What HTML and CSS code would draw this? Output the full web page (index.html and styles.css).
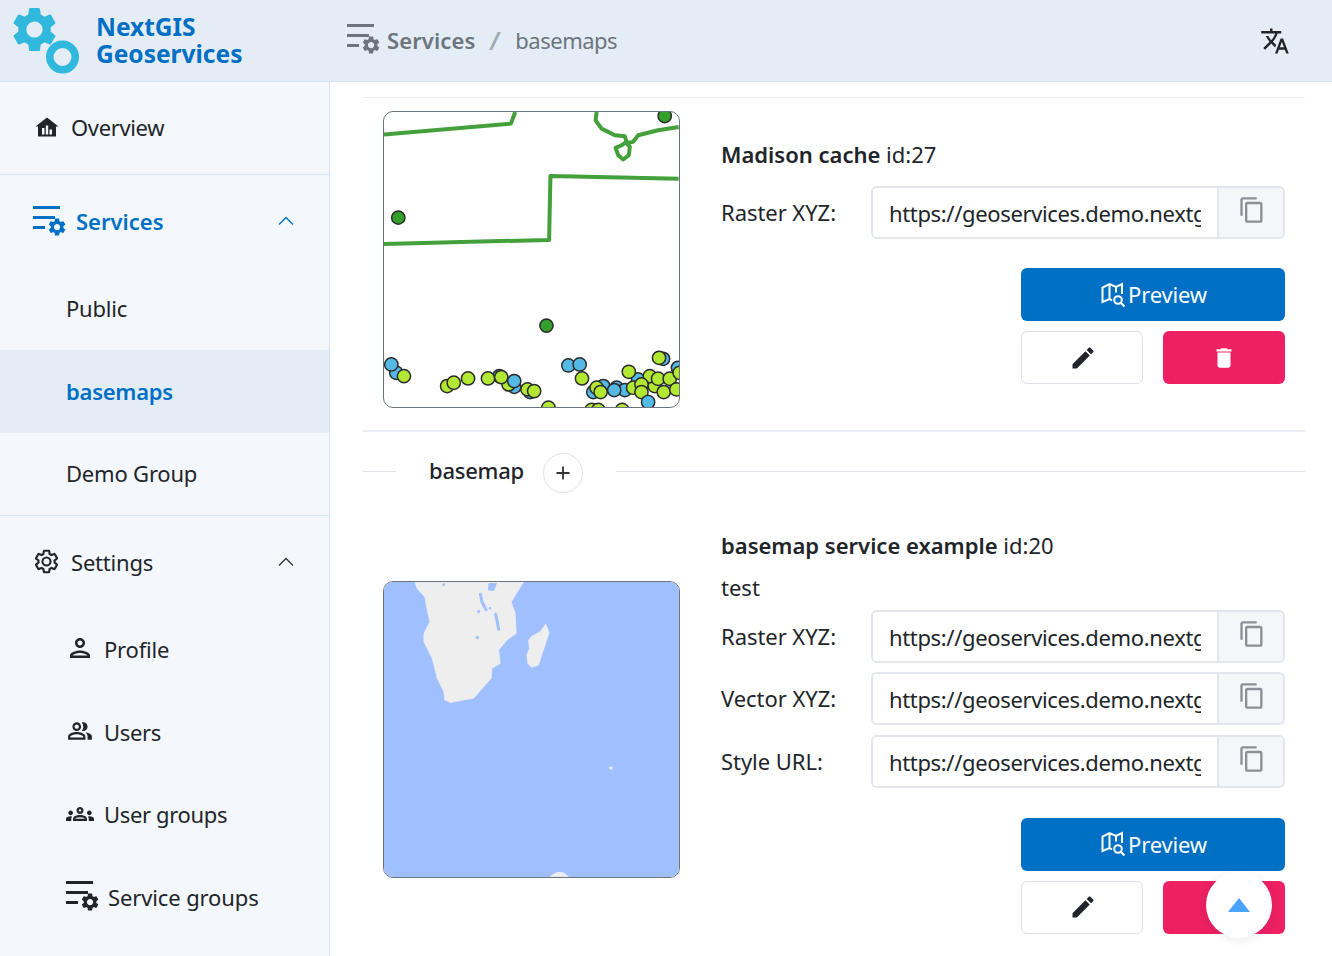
FILE: index.html
```html
<!DOCTYPE html>
<html lang="en">
<head>
<meta charset="utf-8">
<title>NextGIS Geoservices</title>
<link rel="stylesheet" href="styles.css">
</head>
<body>
<svg class="defs" width="0" height="0" aria-hidden="true">
  <defs>
    <path id="gear" d="M19.14 12.94c.04-.3.06-.61.06-.94 0-.32-.02-.64-.07-.94l2.03-1.58c.18-.14.23-.41.12-.61l-1.92-3.32c-.12-.22-.37-.29-.59-.22l-2.39.96c-.5-.38-1.03-.7-1.62-.94l-.36-2.54c-.04-.24-.24-.41-.48-.41h-3.84c-.24 0-.43.17-.47.41l-.36 2.54c-.59.24-1.13.57-1.62.94l-2.39-.96c-.22-.08-.47 0-.59.22L2.74 8.87c-.12.21-.08.47.12.61l2.03 1.58c-.05.3-.09.63-.09.94s.02.64.07.94l-2.03 1.58c-.18.14-.23.41-.12.61l1.92 3.32c.12.22.37.29.59.22l2.39-.96c.5.38 1.03.7 1.62.94l.36 2.54c.05.24.24.41.48.41h3.84c.24 0 .44-.17.47-.41l.36-2.54c.59-.24 1.13-.56 1.62-.94l2.39.96c.22.08.47 0 .59-.22l1.92-3.32c.12-.22.07-.47-.12-.61l-2.01-1.58zM12 15.6c-1.98 0-3.6-1.62-3.6-3.6s1.62-3.6 3.6-3.6 3.6 1.62 3.6 3.6-1.62 3.6-3.6 3.6z"/>
    <g id="services">
      <rect x="0" y="0" width="27" height="3"/>
      <rect x="0" y="10" width="22" height="3"/>
      <rect x="0" y="20" width="12" height="3"/>
      <use href="#gear" transform="translate(13.500 10.500) scale(.88)"/>
    </g>
    <path id="copy" d="M16 1H4c-1.1 0-2 .9-2 2v14h2V3h12V1zm3 4H8c-1.1 0-2 .9-2 2v14c0 1.1.9 2 2 2h11c1.1 0 2-.9 2-2V7c0-1.1-.9-2-2-2zm0 16H8V7h11v14z"/>
    <path id="edit" d="M3 17.25V21h3.75L17.81 9.94l-3.75-3.75L3 17.25zM20.71 7.04c.39-.39.39-1.02 0-1.41l-2.34-2.34c-.39-.39-1.02-.39-1.41 0l-1.83 1.83 3.75 3.75 1.83-1.83z"/>
    <path id="trash" d="M6 19c0 1.1.9 2 2 2h8c1.1 0 2-.9 2-2V7H6v12zM19 4h-3.5l-1-1h-5l-1 1H5v2h14V4z"/>
    <g id="mapsearch" fill="none" stroke="currentColor" stroke-width="2">
      <path d="M11 17.500 8.500 16 1.500 19V4.500l7-3.500 6.500 3 6-3V11"/>
      <path d="M8.500 1V16M15 4V9.500"/>
      <circle cx="17" cy="17" r="3.800"/>
      <path d="M19.800 19.800 23.500 23.500"/>
    </g>
  </defs>
</svg>

<header class="topbar">
  <div class="brand">
    <svg class="brand-logo" viewBox="0 0 68 68" aria-hidden="true">
      <use href="#gear" class="logo-gear" transform="translate(-5.500 -4.500) scale(2.250)"/>
      <circle class="logo-ring" cx="49.500" cy="50" r="12.750"/>
    </svg>
    <div class="brand-name">NextGIS<br>Geoservices</div>
  </div>
  <nav class="crumbs">
    <svg class="icon-services crumb-icon" viewBox="0 0 32 32" aria-hidden="true"><use href="#services"/></svg>
    <span class="crumb-main">Services</span>
    <span class="crumb-sep">/</span>
    <span class="crumb-sub">basemaps</span>
  </nav>
  <svg class="translate" viewBox="0 0 24 24" aria-hidden="true"><path d="M12.87 15.070l-2.540-2.510.03-.03c1.740-1.940 2.980-4.170 3.710-6.530H17V4h-7V2H8v2H1v1.990h11.170C11.500 7.920 10.440 9.750 9 11.350 8.070 10.320 7.300 9.190 6.690 8h-2c.73 1.630 1.730 3.170 2.980 4.560l-5.090 5.020L4 19l5-5 3.110 3.110.76-2.040zM18.500 10h-2L12 22h2l1.120-3h4.750L21 22h2l-4.500-12zm-2.620 7l1.620-4.330L19.120 17h-3.240z"/></svg>
</header>

<div class="layout">
  <aside class="sidebar">
    <div class="top-item first-top border-b">
      <svg class="icon-24" viewBox="0 0 24 24" aria-hidden="true"><path fill-rule="evenodd" d="M12 2.500 0.500 11.500H3V21.500H21V11.500H23.500ZM7 13H9.500V19.500H7ZM10.800 10.500H13.200V19.500H10.800ZM14.500 14.500H17V19.500H14.500Z"/></svg>
      <span class="tight">Overview</span>
    </div>
    <div class="top-item active-top">
      <svg class="icon-services side-services" viewBox="0 0 32 32" aria-hidden="true"><use href="#services"/></svg>
      <span class="strong">Services</span>
      <svg class="chev" viewBox="0 0 16 10" aria-hidden="true"><path d="M1 8.500 8 1.500 15 8.500"/></svg>
    </div>
    <div class="sub-item">Public</div>
    <div class="sub-item current">basemaps</div>
    <div class="sub-item border-b">Demo Group</div>
    <div class="top-item settings-top">
      <svg class="gear-outline" viewBox="0 0 24 24" aria-hidden="true"><use href="#gear"/></svg>
      <span>Settings</span>
      <svg class="chev" viewBox="0 0 16 10" aria-hidden="true"><path d="M1 8.500 8 1.500 15 8.500"/></svg>
    </div>
    <div class="sub-item">
      <svg class="sub-icon profile-icon" viewBox="0 0 24 24" aria-hidden="true"><path d="M12 6c1.100 0 2 .9 2 2s-.9 2-2 2-2-.9-2-2 .9-2 2-2m0 10c2.700 0 5.800 1.290 6 2H6c.23-.72 3.310-2 6-2m0-12C9.790 4 8 5.790 8 8s1.790 4 4 4 4-1.790 4-4-1.790-4-4-4zm0 10c-2.670 0-8 1.340-8 4v2h16v-2c0-2.660-5.330-4-8-4z"/></svg>
      <span>Profile</span>
    </div>
    <div class="sub-item">
      <svg class="sub-icon users-icon" viewBox="0 0 24 24" aria-hidden="true"><path d="M16.670 13.130C18.040 14.060 19 15.320 19 17v3h4v-3c0-2.180-3.570-3.470-6.330-3.870z"/><path d="M15 12c2.210 0 4-1.790 4-4s-1.790-4-4-4c-.47 0-.91.1-1.330.24C14.500 5.270 15 6.580 15 8s-.5 2.730-1.330 3.760c.42.14.86.24 1.330.24z"/><path d="M9 12c2.210 0 4-1.790 4-4s-1.790-4-4-4-4 1.790-4 4 1.790 4 4 4zm0-6c1.100 0 2 .9 2 2s-.9 2-2 2-2-.9-2-2 .9-2 2-2z"/><path d="M9 13c-2.670 0-8 1.340-8 4v3h16v-3c0-2.660-5.330-4-8-4zm6 5H3v-.99C3.200 16.290 6.300 15 9 15s5.800 1.290 6 2v1z"/></svg>
      <span class="tight">Users</span>
    </div>
    <div class="sub-item">
      <svg class="sub-icon groups-icon" viewBox="0 0 24 24" aria-hidden="true"><path d="M4 13c1.100 0 2-.9 2-2s-.9-2-2-2-2 .9-2 2 .9 2 2 2zm1.130 1.100c-.37-.06-.74-.1-1.130-.1-.99 0-1.930.21-2.780.58C.48 14.900 0 15.620 0 16.430V18h4.500v-1.610c0-.83.23-1.610.63-2.290zM20 13c1.100 0 2-.9 2-2s-.9-2-2-2-2 .9-2 2 .9 2 2 2zm4 3.430c0-.81-.48-1.530-1.220-1.850-.85-.37-1.790-.58-2.780-.58-.39 0-.76.04-1.130.1.4.68.63 1.460.63 2.290V18H24v-1.570zm-7.760-2.780C15.070 13.140 13.630 12.750 12 12.750c-1.630 0-3.070.4-4.240.9C6.680 14.130 6 15.210 6 16.390V18h12v-1.610c0-1.180-.68-2.260-1.760-2.740zM8.070 16c.09-.23.13-.39.91-.69.97-.38 1.990-.56 3.020-.56s2.050.18 3.020.56c.77.3.81.46.91.69H8.070zM12 8c.55 0 1 .45 1 1s-.45 1-1 1-1-.45-1-1 .45-1 1-1m0-2c-1.660 0-3 1.340-3 3s1.340 3 3 3 3-1.340 3-3-1.340-3-3-3z"/></svg>
      <span class="tight">User groups</span>
    </div>
    <div class="sub-item">
      <svg class="icon-services sub-services" viewBox="0 0 32 32" aria-hidden="true"><use href="#services"/></svg>
      <span class="loose">Service groups</span>
    </div>
  </aside>

  <main class="main">
    <div class="rule-thin"></div>
    <section class="card card-first">
      <div class="thumb">
        <svg class="map" viewBox="25 35 888 888" preserveAspectRatio="none" aria-hidden="true">
          <g class="map-line">
            <path d="M25 103 407 70 420 35"/>
            <path d="M25 432 522 420 526 228 912 236"/>
            <path d="M665 35 662 60 680 85 720 105 750 108 755 125 740 135 722 143 730 165 745 178 762 165 765 140 755 128 775 125 790 105 850 90 912 80"/>
          </g>
          <g class="dot-dark">
            <circle cx="870" cy="47" r="20"/><circle cx="68" cy="353" r="20"/><circle cx="514" cy="678" r="20"/>
          </g>
          <g class="dot-blue">
            <circle cx="62" cy="820" r="20"/><circle cx="372" cy="830" r="20"/><circle cx="417" cy="862" r="20"/><circle cx="465" cy="878" r="20"/><circle cx="580" cy="798" r="20"/><circle cx="614" cy="795" r="20"/><circle cx="655" cy="878" r="20"/><circle cx="685" cy="860" r="20"/><circle cx="725" cy="865" r="20"/><circle cx="750" cy="872" r="20"/><circle cx="790" cy="840" r="20"/><circle cx="865" cy="778" r="20"/><circle cx="910" cy="805" r="20"/>
          </g>
          <g class="dot-lime">
            <circle cx="85" cy="830" r="20"/><circle cx="215" cy="860" r="20"/><circle cx="235" cy="850" r="20"/><circle cx="278" cy="837" r="20"/><circle cx="338" cy="837" r="20"/><circle cx="400" cy="855" r="20"/><circle cx="378" cy="833" r="20"/><circle cx="457" cy="870" r="20"/><circle cx="477" cy="875" r="20"/><circle cx="621" cy="837" r="20"/><circle cx="665" cy="865" r="20"/><circle cx="677" cy="878" r="20"/><circle cx="762" cy="817" r="20"/><circle cx="775" cy="865" r="20"/><circle cx="840" cy="860" r="20"/><circle cx="825" cy="830" r="20"/><circle cx="800" cy="855" r="20"/><circle cx="800" cy="878" r="20"/><circle cx="867" cy="878" r="20"/><circle cx="850" cy="838" r="20"/><circle cx="885" cy="838" r="20"/><circle cx="853" cy="775" r="20"/><circle cx="915" cy="820" r="20"/><circle cx="905" cy="870" r="20"/><circle cx="520" cy="925" r="20"/><circle cx="650" cy="932" r="20"/><circle cx="670" cy="932" r="20"/><circle cx="742" cy="932" r="20"/>
          </g>
          <g class="dot-blue">
            <circle cx="47" cy="795" r="20"/><circle cx="417" cy="845" r="20"/><circle cx="718" cy="872" r="20"/><circle cx="820" cy="908" r="20"/>
          </g>
        </svg>
      </div>
      <div class="info">
        <div class="title"><b>Madison cache</b> id:27</div>
        <div class="url-list">
          <div class="url-row">
            <span class="url-label">Raster XYZ:</span>
            <div class="url-group">
              <input class="url-input" type="text" readonly value="https://geoservices.demo.nextgis.com/api/basemaps/27/{z}/{x}/{y}.png">
              <span class="url-copy"><svg viewBox="0 0 24 24" aria-hidden="true"><use href="#copy"/></svg></span>
            </div>
          </div>
        </div>
        <div class="actions">
          <button class="btn btn-preview"><svg class="btn-map" viewBox="0 0 24 24" aria-hidden="true"><use href="#mapsearch"/></svg>Preview</button>
          <div class="btn-pair">
            <button class="btn btn-edit" aria-label="Edit"><svg viewBox="0 0 24 24" aria-hidden="true"><use href="#edit"/></svg></button>
            <button class="btn btn-delete" aria-label="Delete"><svg viewBox="0 0 24 24" aria-hidden="true"><use href="#trash"/></svg></button>
          </div>
        </div>
      </div>
    </section>

    <div class="rule-thick"></div>

    <div class="group-head">
      <span class="group-line group-line-start"></span>
      <span class="group-name">basemap</span>
      <span class="group-add"><svg viewBox="0 0 16 16" aria-hidden="true"><path d="M8 1.500V14.500M1.500 8H14.500"/></svg></span>
      <span class="group-line group-line-end"></span>
    </div>

    <section class="card card-second">
      <div class="thumb">
        <svg class="map map-sea" viewBox="25 35 888 888" preserveAspectRatio="none" aria-hidden="true">
          <path class="land" d="M118 35 125 55 148 80 155 120 163 155 145 190 145 215 170 265 185 325 205 365 208 390 225 398 265 390 295 385 330 345 348 325 350 295 375 280 370 240 395 210 423 190 420 130 408 95 445 35Z"/>
          <path class="land" d="M512 162 522 188 490 285 470 292 458 280 455 255 463 235 460 210 470 198 495 185Z"/>
          <path class="land" d="M525 922Q555 895 580 922Z"/>
          <circle class="land" cx="708" cy="595" r="4"/>
          <path class="water" d="M340 38H365L356 62 338 60Z"/>
          <path class="water-line" d="M315 72 320 95 332 118"/>
          <path class="water-line" d="M361 132 366 155 370 177"/>
          <circle class="water" cx="205" cy="43" r="4"/>
          <circle class="water" cx="310" cy="124" r="5"/>
          <circle class="water" cx="344" cy="114" r="4"/>
          <circle class="water" cx="306" cy="202" r="5"/>
        </svg>
      </div>
      <div class="info">
        <div class="title"><b>basemap service example</b> id:20</div>
        <div class="desc">test</div>
        <div class="url-list">
          <div class="url-row">
            <span class="url-label">Raster XYZ:</span>
            <div class="url-group">
              <input class="url-input" type="text" readonly value="https://geoservices.demo.nextgis.com/api/basemaps/20/{z}/{x}/{y}.png">
              <span class="url-copy"><svg viewBox="0 0 24 24" aria-hidden="true"><use href="#copy"/></svg></span>
            </div>
          </div>
          <div class="url-row">
            <span class="url-label">Vector XYZ:</span>
            <div class="url-group">
              <input class="url-input" type="text" readonly value="https://geoservices.demo.nextgis.com/api/basemaps/20/{z}/{x}/{y}.pbf">
              <span class="url-copy"><svg viewBox="0 0 24 24" aria-hidden="true"><use href="#copy"/></svg></span>
            </div>
          </div>
          <div class="url-row">
            <span class="url-label">Style URL:</span>
            <div class="url-group">
              <input class="url-input" type="text" readonly value="https://geoservices.demo.nextgis.com/api/basemaps/20/style.json">
              <span class="url-copy"><svg viewBox="0 0 24 24" aria-hidden="true"><use href="#copy"/></svg></span>
            </div>
          </div>
        </div>
        <div class="actions">
          <button class="btn btn-preview"><svg class="btn-map" viewBox="0 0 24 24" aria-hidden="true"><use href="#mapsearch"/></svg>Preview</button>
          <div class="btn-pair">
            <button class="btn btn-edit" aria-label="Edit"><svg viewBox="0 0 24 24" aria-hidden="true"><use href="#edit"/></svg></button>
            <button class="btn btn-delete" aria-label="Delete"><svg viewBox="0 0 24 24" aria-hidden="true"><use href="#trash"/></svg></button>
          </div>
        </div>
      </div>
    </section>
  </main>
</div>

<button class="to-top" aria-label="Scroll to top"><svg viewBox="0 0 22 14" aria-hidden="true"><path d="M11 0 22 14H0Z"/></svg></button>
</body>
</html>
```
FILE: styles.css
```css
* { box-sizing: border-box; }
html, body { height: 100%; }
body {
  margin: 0;
  height: 956px;
  overflow: hidden;
  background: #fff;
  color: #212529;
  font-family: "Noto Sans", sans-serif;
  font-size: 22px;
  line-height: 33px;
}
.defs { position: absolute; }
svg { display: block; fill: currentColor; }

.topbar {
  display: flex;
  align-items: center;
  height: 82px;
  background: #e4ecf6;
  border-bottom: 1px solid #d5e1ef;
}
.brand { display: flex; align-items: center; width: 330px; padding-left: 13px; flex: none; }
.brand-logo { width: 68px; height: 68px; flex: none; overflow: visible; }
.logo-gear { fill: #30b9dd; }
.logo-ring { fill: none; stroke: #30b9dd; stroke-width: 7.500px; }
.brand-name {
  margin-left: 15px;
  color: #0070c5;
  font-weight: 700;
  font-size: 24.500px;
  line-height: 27px;
  margin-top: -1px;
}
.crumbs { display: flex; align-items: center; padding-left: 17px; color: #6c757d; flex: 1; }
.icon-services { width: 32px; height: 32px; flex: none; overflow: visible; }
.crumb-icon { margin-top: -1px; }
.crumb-main { margin-left: 8px; font-weight: 600; margin-top: -1px; letter-spacing: .1px; }
.crumb-sep { margin-left: 15px; color: #a4a9ae; font-size: 25px; font-weight: 600; transform: skewX(-6deg); }
.crumb-sub { margin-left: 15px; letter-spacing: -.5px; }
.translate { width: 30px; height: 30px; margin-right: 42px; color: #212529; flex: none; }

.layout { display: flex; height: 874px; }

.sidebar {
  width: 330px;
  flex: none;
  background: #f4f7fb;
  border-right: 1px solid #d5e1ef;
  overflow: hidden;
  letter-spacing: -.2px;
}
.tight { letter-spacing: -.35px; }
.loose { letter-spacing: -.12px; }
.border-b { border-bottom: 1px solid #d9e4f1; }
.top-item {
  display: flex;
  align-items: center;
  height: 92.500px;
  padding-left: 35px;
  padding-right: 35px;
}
.first-top { height: 93px; padding-bottom: 2px; }
.settings-top { height: 93px; }
.icon-24 { width: 24px; height: 24px; flex: none; margin-right: 12px; }
.gear-outline {
  width: 27px;
  height: 27px;
  margin-left: -2px;
  margin-right: 11px;
  margin-top: -1px;
  flex: none;
  fill: none;
  stroke: currentColor;
  stroke-width: 1.900;
}
.active-top { color: #0070c5; padding-left: 33px; }
.side-services { margin-right: 11px; margin-top: 1px; }
.strong { font-weight: 600; letter-spacing: 0; margin-top: 1px; }
.chev {
  width: 16px;
  height: 10px;
  margin-left: auto;
  fill: none;
  stroke: currentColor;
  stroke-width: 1.300;
  margin-top: -1px;
}
.top-item:not(.active-top) .chev { stroke: #333; }
.sub-item {
  display: flex;
  align-items: center;
  height: 82.500px;
  padding-left: 66px;
}
.sub-item.border-b { height: 83px; }
.sub-item.current { background: #e4ecf6; color: #0070c5; font-weight: 600; letter-spacing: -.25px; }
.sub-icon { flex: none; }
.profile-icon { width: 30px; height: 30px; margin-left: -1px; margin-right: 9px; margin-top: -3px; }
.users-icon { width: 26px; height: 26px; margin-left: 1px; margin-right: 11px; margin-top: -2px; }
.groups-icon { width: 28px; height: 28px; margin-right: 10px; margin-top: -1px; }
.sub-services { margin-right: 10px; }

.main { flex: 1; min-width: 0; padding: 15px 27px 0 33px; overflow: hidden; }
.rule-thin { height: 1px; background: #e9ecf1; }
.rule-thick { height: 2px; background: #e9edf3; }

.card { display: flex; align-items: center; padding: 0 20px; }
.card-first { padding-top: 13px; padding-bottom: 22px; }
.card-second { padding-top: 0; }
.card-second .actions { margin-top: 30px; }

.thumb {
  width: 297px;
  height: 297px;
  flex: none;
  border: 1px solid #6c757d;
  border-radius: 10px;
  overflow: hidden;
}
.map { width: 100%; height: 100%; }
.map-sea { background: #9fbfff; }
.land { fill: #eeeeee; stroke: #eeeeee; stroke-width: 2; stroke-linejoin: round; }
.water { fill: #9fbfff; }
.water-line { fill: none; stroke: #9fbfff; stroke-width: 9; stroke-linecap: round; }
.map-line path { fill: none; stroke: #43a03a; stroke-width: 12; stroke-linejoin: round; }
.dot-dark circle, .dot-blue circle, .dot-lime circle { stroke: #2b2b2b; stroke-width: 4.500; }
.dot-dark circle { fill: #33a02c; }
.dot-blue circle { fill: #55b9e6; }
.dot-lime circle { fill: #b2e834; }

.info { flex: 1; min-width: 0; margin-left: 41px; padding-top: 3px; }
.title { margin-bottom: 9px; }
.title b { font-weight: 600; }
.desc { height: 33px; }
.url-list { padding-top: 5.500px; }
.url-row { display: flex; align-items: center; margin-bottom: 9.500px; }
.url-row:last-child { margin-bottom: 0; }
.url-label { width: 150px; flex: none; letter-spacing: -.05px; }
.url-group {
  display: flex;
  flex: 1;
  min-width: 0;
  height: 53px;
  border: 2px solid #e3e6ed;
  border-radius: 6px;
  overflow: hidden;
}
.url-input {
  flex: 1;
  min-width: 0;
  height: 100%;
  padding: 1px 16px 0 16px;
  border: 0;
  outline: 0;
  background: #fff;
  color: #212529;
  font: inherit;
  letter-spacing: -.35px;
}
.url-copy {
  display: flex;
  align-items: center;
  justify-content: center;
  width: 66px;
  flex: none;
  background: #f5f6fa;
  border-left: 2px solid #e3e6ed;
  color: #8b8f96;
}
.url-copy svg { width: 28px; height: 28px; margin-top: -5px; margin-left: 1px; }

.actions { width: 264px; margin-left: auto; margin-top: 29.500px; }
.btn {
  display: flex;
  align-items: center;
  justify-content: center;
  height: 53px;
  border: 0;
  border-radius: 6px;
  font: inherit;
  padding: 0;
}
.btn-preview { width: 100%; background: #0070c5; color: #fff; gap: 3px; padding-left: 2px; letter-spacing: -.15px; }
.btn-map { width: 24px; height: 24px; overflow: visible; }
.btn-pair { display: flex; justify-content: space-between; margin-top: 10px; }
.btn-edit { width: 122px; background: #fff; border: 1px solid #dee1e8; color: #212529; padding-left: 2px; }
.btn-edit svg { width: 28px; height: 28px; }
.btn-delete { width: 122px; background: #ec2063; color: #fff; }
.btn-delete svg { width: 26px; height: 26px; }

.group-head { display: flex; align-items: center; height: 40px; margin-top: 21px; margin-bottom: 33px; }
.group-line { height: 1px; background: #dfe2e8; margin-top: -3px; }
.group-line-start { width: 33px; flex: none; }
.group-line-end { flex: 1; margin-left: 33px; }
.group-name { margin-left: 33px; font-weight: 500; margin-top: -6px; letter-spacing: -.25px; }
.group-add {
  display: flex;
  align-items: center;
  justify-content: center;
  width: 40px;
  height: 40px;
  margin-left: 19px;
  border: 1px solid #dfe2e8;
  border-radius: 50%;
  flex: none;
}
.group-add svg { width: 16px; height: 16px; fill: none; stroke: #333; stroke-width: 1.800; }

.to-top {
  position: fixed;
  left: 1206px;
  top: 872px;
  width: 66px;
  height: 66px;
  border: 0;
  border-radius: 50%;
  background: #fff;
  box-shadow: 0 2px 10px rgba(0, 0, 0, .08);
  display: flex;
  align-items: center;
  justify-content: center;
  padding: 0;
}
.to-top svg { width: 22px; height: 14px; fill: #4aa3ff; }
```
